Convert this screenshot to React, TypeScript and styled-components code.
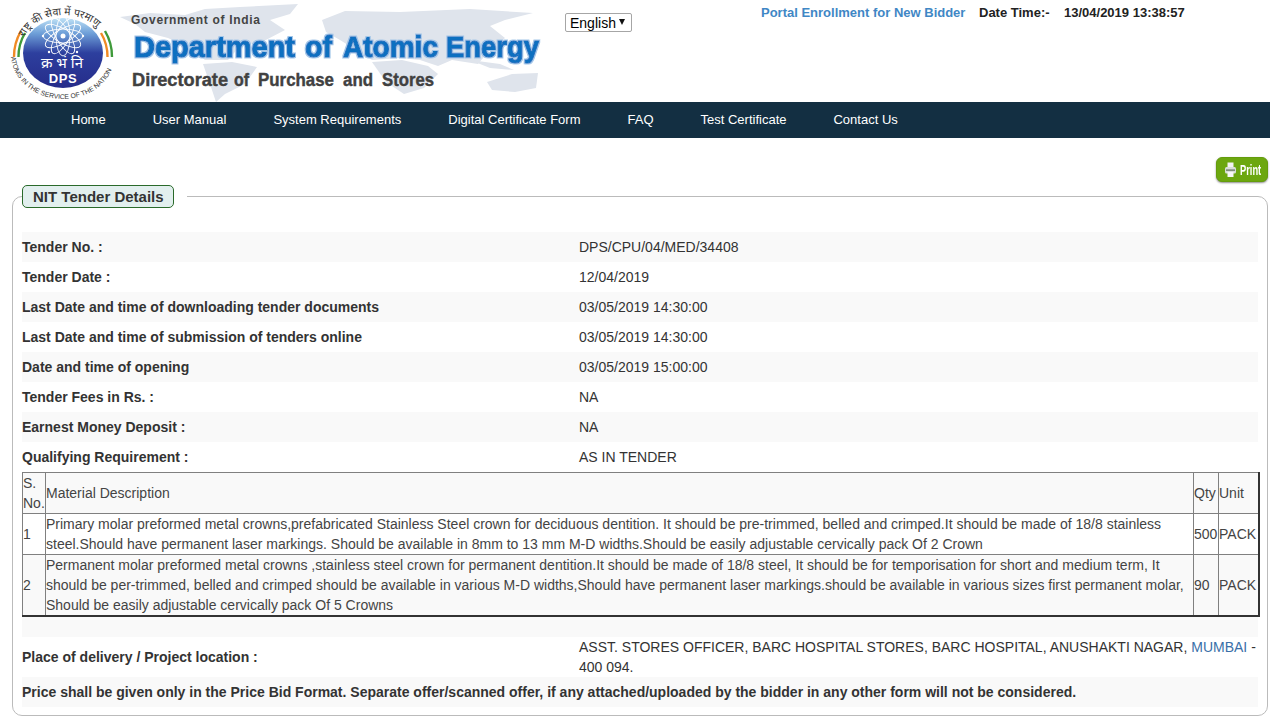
import { Fragment } from "react";
import { createGlobalStyle, styled } from "styled-components";

const GlobalStyle = createGlobalStyle`
    * {
        box-sizing: border-box;
    }

    html, body {
        margin: 0;
        padding: 0;
        background-color: #ffffff;
        overflow: hidden;
    }

    body {
        font-family: "Liberation Sans", Arial, sans-serif;
        font-size: 14px;
        color: #333333;
    }
`;

const menuItems = [
    "Home",
    "User Manual",
    "System Requirements",
    "Digital Certificate Form",
    "FAQ",
    "Test Certificate",
    "Contact Us",
];

const detailsTop = [
    { label: "Tender No. :", value: "DPS/CPU/04/MED/34408" },
    { label: "Tender Date :", value: "12/04/2019" },
    { label: "Last Date and time of downloading tender documents", value: "03/05/2019 14:30:00" },
    { label: "Last Date and time of submission of tenders online", value: "03/05/2019 14:30:00" },
    { label: "Date and time of opening", value: "03/05/2019 15:00:00" },
    { label: "Tender Fees in Rs. :", value: "NA" },
    { label: "Earnest Money Deposit :", value: "NA" },
    { label: "Qualifying Requirement :", value: "AS IN TENDER" },
];

const materials = [
    {
        no: "1",
        text: "Primary molar preformed metal crowns,prefabricated Stainless Steel crown for deciduous dentition. It should be pre-trimmed, belled and crimped.It should be made of 18/8 stainless steel.Should have permanent laser markings. Should be available in 8mm to 13 mm M-D widths.Should be easily adjustable cervically pack Of 2 Crown",
        qty: "500",
    },
    {
        no: "2",
        text: "Permanent molar preformed metal crowns ,stainless steel crown for permanent dentition.It should be made of 18/8 steel, It should be for temporisation for short and medium term, It should be per-trimmed, belled and crimped should be available in various M-D widths,Should have permanent laser markings.should be available in various sizes first permanent molar, Should be easily adjustable cervically pack Of 5 Crowns",
        qty: "90",
    },
];

const titleWords = [
    { word: "Department", x: 134, len: 161 },
    { word: "of", x: 305, len: 27 },
    { word: "Atomic", x: 343, len: 95 },
    { word: "Energy", x: 446, len: 93 },
];

const subtitleWords = [
    { word: "Directorate", x: 132, len: 96 },
    { word: "of", x: 234, len: 15 },
    { word: "Purchase", x: 258, len: 76 },
    { word: "and", x: 343, len: 30 },
    { word: "Stores", x: 382, len: 52 },
];

const orbitAngles = [0, 30, 60, 90, 120, 150];

const Banner = () => (
    <svg width="555" height="102" viewBox="0 0 555 102">
        <defs>
            <linearGradient id="globe" x1="0" y1="0" x2="0" y2="1">
                <stop offset="0" stopColor="#bfe2f6" />
                <stop offset="0.22" stopColor="#6e9fd8" />
                <stop offset="0.5" stopColor="#2d3f9e" />
                <stop offset="1" stopColor="#262c8a" />
            </linearGradient>
            <filter id="halo" x="-5%" y="-20%" width="110%" height="140%">
                <feMorphology in="SourceAlpha" operator="dilate" radius="1.4" result="grown" />
                <feFlood floodColor="#a3c6e8" />
                <feComposite in2="grown" operator="in" result="edge" />
                <feMerge>
                    <feMergeNode in="edge" />
                    <feMergeNode in="SourceGraphic" />
                </feMerge>
            </filter>
            <path id="arcTop" d="M24 38 A42 33 0 0 1 104 38" />
            <path id="arcBottom" d="M11 54 A52 45 0 0 0 115 54" />
        </defs>

        {/* world map behind the title */}
        <g fill="#dfe4ec">
            <path d="M120 17 L150 13 L185 15 L205 9 L240 7 L298 4 L290 14 L270 20 L285 30 L262 42 L240 46 L228 60 L205 60 L190 48 L168 38 L145 32 L135 24 Z" />
            <path d="M203 64 L232 62 L257 67 L245 84 L225 94 L216 102 L210 84 Z" />
            <path d="M322 20 L345 11 L400 12 L470 9 L533 13 L505 20 L490 26 L505 38 L488 52 L478 64 L452 60 L438 66 L420 60 L400 58 L372 60 L340 40 L326 32 Z" />
            <path d="M372 62 L402 60 L428 66 L438 74 L424 88 L404 94 L386 82 Z" />
            <path d="M487 82 L512 74 L538 73 L536 88 L515 92 L492 90 Z" />
            <path d="M470 60 L500 64 L514 70 L490 68 Z" />
        </g>

        {/* dps emblem */}
        <path d="M14 57 A50 50 0 0 1 21 31" fill="none" stroke="#f08a24" strokeWidth="2.4" />
        <path d="M18.500 57 A46 46 0 0 1 25 33" fill="none" stroke="#3f9a3a" strokeWidth="2.4" />
        <path d="M112 57 A50 50 0 0 0 105 31" fill="none" stroke="#3f9a3a" strokeWidth="2.4" />
        <path d="M107.500 57 A46 46 0 0 0 101 33" fill="none" stroke="#f08a24" strokeWidth="2.4" />
        <ellipse cx="63" cy="53" rx="40" ry="35" fill="url(#globe)" />
        <g fill="none" stroke="#ffffff" strokeWidth="0.9">
            {orbitAngles.map((angle) => (
                <ellipse key={angle} cx="63" cy="36" rx="7" ry="20" transform={`rotate(${angle} 63 36)`} />
            ))}
        </g>
        <g fill="#ffffff">
            <circle cx="63" cy="36" r="2.5" />
            <circle cx="43" cy="36" r="1.2" />
            <circle cx="83" cy="36" r="1.2" />
            <circle cx="49" cy="52" r="1.2" />
            <circle cx="77" cy="52" r="1.2" />
        </g>
        <text x="62" y="68" textAnchor="middle" fontFamily="'Noto Sans', sans-serif" fontSize="15" fill="#ffffff">
            क्र भं नि
        </text>
        <text x="63" y="83" textAnchor="middle" fontFamily="'Liberation Sans', sans-serif" fontSize="13" fontWeight="700" letterSpacing="0.6" fill="#ffffff">
            DPS
        </text>
        <text fontFamily="'Noto Sans', sans-serif" fontSize="10.500" fill="#333333">
            <textPath href="#arcTop" startOffset="1%">राष्ट्र की सेवा में परमाणु</textPath>
        </text>
        <text fontFamily="'Liberation Sans', sans-serif" fontSize="6.8" fill="#333333">
            <textPath href="#arcBottom" startOffset="2%">ATOMS IN THE SERVICE OF THE NATION</textPath>
        </text>

        {/* title */}
        <text x="131" y="23.500" fontFamily="'Liberation Sans', sans-serif" fontSize="12" fontWeight="700" fill="#444444" textLength="129">
            Government of India
        </text>
        <text
            y="57"
            fontFamily="'Liberation Sans', sans-serif"
            fontSize="30"
            fontWeight="700"
            fill="#0b6fc0"
            stroke="#0b6fc0"
            strokeWidth="1"
            filter="url(#halo)"
        >
            {titleWords.map((w) => (
                <Fragment key={w.word}>
                    <tspan x={w.x} textLength={w.len} lengthAdjust="spacingAndGlyphs">{w.word}</tspan>{" "}
                </Fragment>
            ))}
        </text>
        <text y="86" fontFamily="'Liberation Sans', sans-serif" fontSize="18" fontWeight="700" fill="#414141" stroke="#414141" strokeWidth="0.4">
            {subtitleWords.map((w) => (
                <Fragment key={w.x}>
                    <tspan x={w.x} textLength={w.len} lengthAdjust="spacingAndGlyphs">{w.word}</tspan>{" "}
                </Fragment>
            ))}
        </text>
    </svg>
);

const PrinterIcon = () => (
    <svg width="11" height="16" viewBox="0 0 11 16">
        <rect x="2.500" y="0.500" width="6" height="5" fill="#f2f2f2" />
        <rect x="0" y="5" width="11" height="6.500" rx="1.500" fill="#d9ded8" />
        <rect x="1" y="7.500" width="9" height="1.200" fill="#5d6b57" />
        <rect x="2.500" y="10" width="6" height="5" fill="#f7f7f7" />
    </svg>
);

const App = () => {
    return (
        <>
            <GlobalStyle />
            <HeaderContainer>
                <HeaderLogo>
                    <Banner />
                </HeaderLogo>
                <SelectWrap>
                    <LanguageSelect defaultValue="English">
                        <option>English</option>
                    </LanguageSelect>
                </SelectWrap>
                <HeaderInfo>
                    <EnrollLink href="#">Portal Enrollment for New Bidder</EnrollLink>
                    <DateLabel>Date Time:-</DateLabel>
                    <DateValue>13/04/2019 13:38:57</DateValue>
                </HeaderInfo>
            </HeaderContainer>

            <NavBar>
                {menuItems.map((item) => (
                    <NavItem key={item} href="#">{item}</NavItem>
                ))}
            </NavBar>

            <PrintRow>
                <PrintButton type="button">
                    <PrinterIcon />
                    <PrintText>Print</PrintText>
                </PrintButton>
            </PrintRow>

            <TenderBox>
                <TenderLegend>
                    <LegendLabel>NIT Tender Details</LegendLabel>
                </TenderLegend>

                {detailsTop.map((row) => (
                    <DetailRow key={row.label}>
                        <DetailLabel>{row.label}</DetailLabel>
                        <span>{row.value}</span>
                    </DetailRow>
                ))}

                <MaterialTable>
                    <colgroup>
                        <col width="23" />
                        <col width="1148" />
                        <col width="25" />
                        <col width="40" />
                    </colgroup>
                    <tbody>
                        <tr>
                            <td>S. No.</td>
                            <td>Material Description</td>
                            <td>Qty</td>
                            <td>Unit</td>
                        </tr>
                        {materials.map((item) => (
                            <tr key={item.no}>
                                <td>{item.no}</td>
                                <td>{item.text}</td>
                                <td>{item.qty}</td>
                                <td>PACK</td>
                            </tr>
                        ))}
                    </tbody>
                </MaterialTable>

                <BlankRow />
                <PlaceRow>
                    <DetailLabel>Place of delivery / Project location :</DetailLabel>
                    <span>
                        ASST. STORES OFFICER, BARC HOSPITAL STORES, BARC HOSPITAL, ANUSHAKTI NAGAR, <CityLink>MUMBAI</CityLink> -<br />400 094.
                    </span>
                </PlaceRow>
                <NoteRow>Price shall be given only in the Price Bid Format. Separate offer/scanned offer, if any attached/uploaded by the bidder in any other form will not be considered.</NoteRow>
            </TenderBox>
        </>
    );
};

const HeaderContainer = styled.header`
    height: 102px;
    display: flex;
    align-items: flex-start;
`;

const HeaderLogo = styled.div`
    width: 565px;
    height: 102px;
    flex-shrink: 0;

    & svg {
        display: block;
    }
`;

const SelectWrap = styled.div`
    position: relative;
    width: 67px;
    height: 19px;
    margin-top: 13px;

    &::after {
        content: "";
        position: absolute;
        top: 6px;
        right: 7px;
        border: 3.5px solid transparent;
        border-bottom: 0;
        border-top: 6px solid #111111;
    }
`;

const LanguageSelect = styled.select`
    appearance: none;
    display: block;
    width: 100%;
    height: 100%;
    padding: 0 0 0 4px;
    font-family: "Liberation Sans", Arial, sans-serif;
    font-size: 14px;
    color: #000000;
    background-color: #ffffff;
    border: 1px solid #a6a6a6;
    border-radius: 2px;
`;

const HeaderInfo = styled.div`
    display: flex;
    align-items: baseline;
    margin-left: 129px;
    margin-top: 5px;
    font-weight: bold;
    color: #222222;
`;

const EnrollLink = styled.a`
    font-size: 13px;
    color: #3f87c5;
    text-decoration: none;
    width: 218px;
`;

const DateLabel = styled.span`
    font-size: 13px;
    width: 85px;
`;

const DateValue = styled.span`
    font-size: 13px;
`;

const NavBar = styled.nav`
    height: 36px;
    display: flex;
    align-items: flex-start;
    padding-left: 47.5px;
    background-color: #132f42;
`;

const NavItem = styled.a`
    padding: 0 23.5px;
    font-size: 13px;
    line-height: 35px;
    color: #ffffff;
    text-decoration: none;
    white-space: nowrap;
`;

const PrintRow = styled.div`
    height: 47px;
    display: flex;
    justify-content: flex-end;
    align-items: flex-start;
    padding: 19px 2px 0 0;
`;

const PrintButton = styled.button`
    width: 52px;
    height: 25px;
    display: flex;
    align-items: center;
    gap: 4px;
    padding: 0 0 0 8px;
    border: 1px solid #649c0c;
    border-radius: 6px;
    background-color: #6ca70f;
    box-shadow: 0 1px 2px rgba(0, 0, 0, 0.45);
    color: #ffffff;
`;

const PrintText = styled.span`
    display: inline-block;
    width: 21px;
    font-family: "Liberation Sans", Arial, sans-serif;
    font-size: 15px;
    font-weight: bold;
    transform: scaleX(0.62);
    transform-origin: left center;
`;

const TenderBox = styled.fieldset`
    min-width: 0;
    margin: 0 2px 0 12px;
    padding: 0 9px 8px;
    border: 1px solid #bbbbbb;
    border-radius: 10px;
`;

const TenderLegend = styled.legend`
    height: 23px;
    margin: 0 0 24px 0;
    padding: 0 13px 0 0;
`;

const LegendLabel = styled.span`
    display: block;
    width: 152px;
    height: 23px;
    padding-left: 10px;
    font-size: 15px;
    font-weight: bold;
    line-height: 21px;
    color: #333333;
    background-color: #e2efee;
    border: 1px solid #2a6a2a;
    border-radius: 5px;
`;

const DetailRow = styled.div`
    display: grid;
    grid-template-columns: 557px 1fr;
    align-items: center;
    min-height: 30px;
    line-height: 20px;

    &:nth-of-type(odd) {
        background-color: #f9f9f9;
    }
`;

const DetailLabel = styled.span`
    font-weight: bold;
`;

const MaterialTable = styled.table`
    width: 1236px;
    table-layout: fixed;
    border-collapse: collapse;
    border-top: 1px solid #333333;
    border-left: 1px solid #333333;
    border-right: 2px solid #333333;
    border-bottom: 2px solid #333333;
    line-height: 20px;
    color: #444444;

    & td {
        padding: 0;
        border: 1px solid #808080;
    }

    & tr:nth-child(odd) {
        background-color: #f9f9f9;
    }
`;

const BlankRow = styled.div`
    height: 20px;
    background-color: #f9f9f9;
`;

const PlaceRow = styled.div`
    display: grid;
    grid-template-columns: 557px 1fr;
    align-items: center;
    height: 40px;
    line-height: 20px;
`;

const CityLink = styled.span`
    color: #3a6fa8;
`;

const NoteRow = styled.div`
    height: 30px;
    font-weight: bold;
    line-height: 30px;
    background-color: #f9f9f9;
`;

export default App;
